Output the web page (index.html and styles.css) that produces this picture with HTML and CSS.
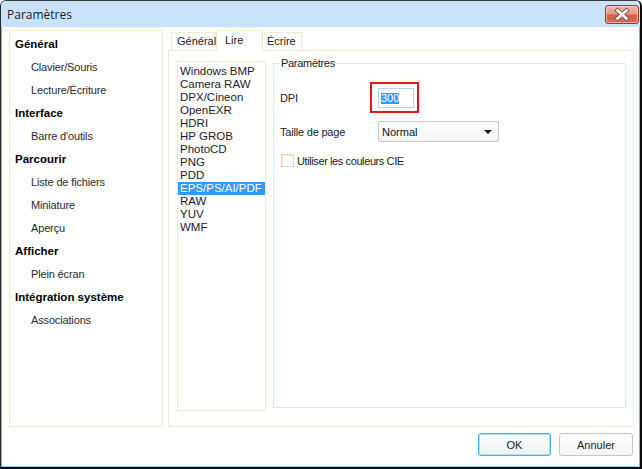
FILE: index.html
```html
<!DOCTYPE html>
<html lang="fr">
<head>
<meta charset="utf-8">
<title>Paramètres</title>
<link rel="stylesheet" href="styles.css">
</head>
<body>
<div class="window">
  <div class="titlebar">
    <span class="title">Paramètres</span>
    <button class="close" aria-label="Fermer">
      <svg width="34" height="19" viewBox="0 0 34 19">
        <path d="M12.5 5.5 L21.5 13.5 M21.5 5.5 L12.5 13.5" stroke="#7a5a56" stroke-width="4.6" stroke-linecap="square" fill="none"/>
        <path d="M12.5 5.5 L21.5 13.5 M21.5 5.5 L12.5 13.5" stroke="#ffffff" stroke-width="2.6" stroke-linecap="square" fill="none"/>
      </svg>
    </button>
  </div>
  <div class="client">
    <div class="main">
      <nav class="sidebar">
        <div class="nav-head">Général</div>
        <div class="nav-item">Clavier/Souris</div>
        <div class="nav-item">Lecture/Écriture</div>
        <div class="nav-head">Interface</div>
        <div class="nav-item">Barre d'outils</div>
        <div class="nav-head">Parcourir</div>
        <div class="nav-item">Liste de fichiers</div>
        <div class="nav-item">Miniature</div>
        <div class="nav-item">Aperçu</div>
        <div class="nav-head">Afficher</div>
        <div class="nav-item">Plein écran</div>
        <div class="nav-head">Intégration système</div>
        <div class="nav-item">Associations</div>
      </nav>
      <div class="tabs">
        <div class="tabstrip">
          <div class="tab tab-general">Général</div>
          <div class="tab tab-lire selected">Lire</div>
          <div class="tab tab-ecrire">Écrire</div>
        </div>
        <div class="tabpanel">
          <div class="listbox">
            <div class="li">Windows BMP</div>
            <div class="li">Camera RAW</div>
            <div class="li">DPX/Cineon</div>
            <div class="li">OpenEXR</div>
            <div class="li">HDRI</div>
            <div class="li">HP GROB</div>
            <div class="li">PhotoCD</div>
            <div class="li">PNG</div>
            <div class="li">PDD</div>
            <div class="li active">EPS/PS/AI/PDF</div>
            <div class="li">RAW</div>
            <div class="li">YUV</div>
            <div class="li">WMF</div>
          </div>
          <fieldset class="group">
            <legend>Paramètres</legend>
            <div class="form">
              <div class="row row-dpi">
                <span class="label">DPI</span>
                <span class="highlight-box"><span class="input"><span class="sel">300</span></span></span>
              </div>
              <div class="row row-size">
                <span class="label">Taille de page</span>
                <span class="combo"><span>Normal</span><span class="arrow"></span></span>
              </div>
              <div class="row row-check">
                <span class="checkbox"></span>
                <span class="check-label">Utiliser les couleurs CIE</span>
              </div>
            </div>
          </fieldset>
        </div>
      </div>
    </div>
    <div class="buttons">
      <button class="btn btn-default">OK</button>
      <button class="btn">Annuler</button>
    </div>
  </div>
</div>
</body>
</html>
```

FILE: styles.css
```css
* { box-sizing: border-box; }
html, body { margin: 0; padding: 0; background: #ffffff; }
body {
  font-family: "Liberation Sans", Arial, sans-serif;
  font-size: 11px;
  color: #1a1a1a;
}
.window {
  width: 642px;
  height: 469px;
  border-left: 1px solid #2a2a2a;
  border-top: 1px solid #3a3a3a;
  border-right: 2px solid #0c0c0c;
  border-bottom: 2px solid #0c0c0c;
  border-radius: 6px 6px 0 0;
  background: #c9e2f9;
  display: flex;
  flex-direction: column;
  overflow: hidden;
}
.titlebar {
  height: 26px;
  flex: none;
  display: flex;
  align-items: flex-start;
  justify-content: space-between;
  padding-left: 6px;
  padding-right: 1px;
  background: #c9e2f9;
}
.title {
  font-family: "Open Sans", "Noto Sans", sans-serif;
  font-size: 12px;
  line-height: 28px;
  color: #1b1b2b;
}
.close {
  margin-top: 4px;
  width: 34px;
  height: 19px;
  padding: 0;
  border: 1px solid #8c3c31;
  border-radius: 3px;
  background: linear-gradient(#f0b9ab 0%, #e89682 45%, #d65c43 55%, #d96a52 100%);
  display: flex;
  align-items: center;
  justify-content: center;
  box-shadow: inset 0 0 0 1px rgba(255,220,210,0.6);
}
.close svg { display: block; margin: -1px; }
.client {
  flex: 1;
  background: #ffffff;
  border-left: 1px solid #6cb6e8;
  border-right: 1px solid #6cb6e8;
  border-bottom: 1px solid #8fd3f3;
  display: flex;
  flex-direction: column;
}
.main {
  display: flex;
  height: 397px;
  margin-top: 3px;
  margin-left: 7px;
  gap: 5px;
}
.sidebar {
  width: 154px;
  height: 397px;
  border: 1px solid #ebeecf;
  padding-top: 2px;
}
.nav-head, .nav-item {
  height: 23px;
  line-height: 23px;
  white-space: nowrap;
}
.nav-head {
  padding-left: 5px;
  font-weight: bold;
  font-size: 11.5px;
  color: #000000;
}
.nav-item {
  padding-left: 21px;
  color: #2a2a2a;
  letter-spacing: -0.15px;
}
.tabs {
  width: 466px;
  display: flex;
  flex-direction: column;
}
.tabstrip {
  height: 20px;
  display: flex;
  align-items: flex-end;
  padding-left: 3px;
}
.tab {
  height: 18px;
  line-height: 17px;
  border: 1px solid #ebeecf;
  border-bottom: none;
  background: #ffffff;
  color: #1a1a1a;
  white-space: nowrap;
}
.tab-general { width: 46px; padding-left: 5px; }
.tab-lire { width: 46px; padding-left: 8px; }
.tab-ecrire { width: 39px; padding-left: 4px; border-left: none; }
.tab.selected {
  height: 21px;
  line-height: 18px;
  margin-bottom: -1px;
  position: relative;
  z-index: 1;
  border-left: none;
}
.tabpanel {
  height: 377px;
  border: 1px solid #ebeecf;
  display: flex;
  align-items: flex-start;
}
.listbox {
  width: 89px;
  height: 350px;
  margin-top: 10px;
  margin-left: 8px;
  border: 1px solid #ebeecf;
  padding-top: 3px;
}
.li {
  height: 13px;
  line-height: 13px;
  padding-left: 2px;
  font-size: 11.5px;
  color: #1e1a2a;
  white-space: nowrap;
}
.li.active {
  background: #3399ff;
  color: #ffffff;
}
.group {
  width: 353px;
  height: 351px;
  margin: 6px 0 0 7px;
  padding: 0 6px;
  border: 1px solid #d6ebfa;
  min-inline-size: 0;
}
.group legend {
  padding: 0 1px;
  line-height: 13px;
  font-size: 11px;
  letter-spacing: -0.3px;
  color: #1a1a1a;
}
.form {
  display: flex;
  flex-direction: column;
  padding-top: 12px;
}
.row {
  display: flex;
  align-items: center;
}
.label {
  width: 90px;
  letter-spacing: -0.2px;
}
.row-dpi { height: 31px; }
.highlight-box {
  display: block;
  height: 31px;
  border: 2px solid #e8141a;
  padding: 4px 3px 3px 6px;
}
.input {
  display: flex;
  align-items: center;
  width: 36px;
  height: 20px;
  border: 1px solid #b9d1e6;
  padding-left: 2px;
}
.sel {
  background: #3399ff;
  color: #ffffff;
  line-height: 11px;
  height: 11px;
}
.row-size { margin-top: 8px; height: 21px; }
.combo {
  margin-left: 8px;
  width: 121px;
  height: 21px;
  border: 1px solid #c8c8c8;
  border-radius: 2px;
  background: linear-gradient(#ffffff, #f3f3f3);
  display: flex;
  align-items: center;
  justify-content: space-between;
  padding: 0 6px 0 3px;
  color: #111;
}
.arrow {
  width: 0;
  height: 0;
  border-left: 4px solid transparent;
  border-right: 4px solid transparent;
  border-top: 4px solid #111;
}
.row-check { margin-top: 12px; height: 13px; }
.checkbox {
  width: 13px;
  height: 13px;
  margin-left: 1px;
  border: 1px solid #f3cccc;
  box-shadow: inset 1px 1px 0 #f6f1bd;
  background: #ffffff;
}
.check-label {
  margin-left: 3px;
  letter-spacing: -0.4px;
  color: #1a1a1a;
}
.buttons {
  display: flex;
  justify-content: flex-end;
  gap: 8px;
  margin-top: 6px;
  padding-right: 6px;
}
.btn {
  height: 23px;
  width: 74px;
  padding: 0;
  font-family: "Liberation Sans", Arial, sans-serif;
  font-size: 11px;
  color: #1a1a1a;
  border: 1px solid #c4c4c4;
  border-radius: 3px;
  background: linear-gradient(#ffffff, #f4f4f4);
}
.btn-default {
  width: 73px;
  border: 1px solid #3eb2ea;
  box-shadow: inset 0 0 0 1px #a9e2fb;
  background: linear-gradient(#fdfdfd, #f1f1f1);
}
```
